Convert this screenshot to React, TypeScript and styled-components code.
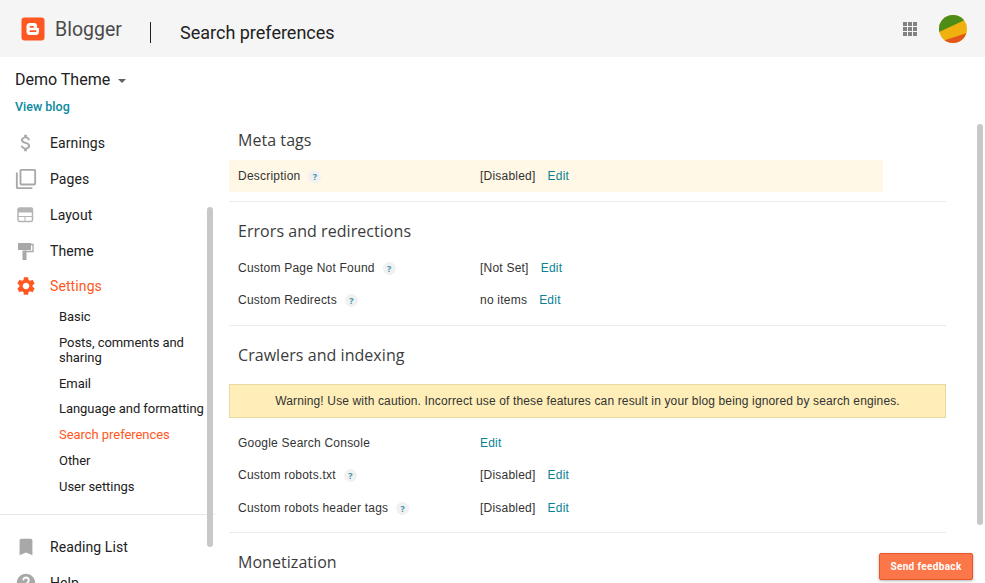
import styled, { createGlobalStyle } from "styled-components";
import {
  MdAttachMoney,
  MdFilterNone,
  MdSettings,
  MdBookmark,
  MdHelp,
} from "react-icons/md";

const GlobalStyle = createGlobalStyle`
  html, body {
    margin: 0;
    height: 100%;
    overflow: hidden;
    background: #fff;
  }
  #root {
    height: 100%;
  }
`;

const Page = styled.div`
  position: relative;
  display: flex;
  flex-direction: column;
  width: 985px;
  height: 583px;
  overflow: hidden;
  font-family: Roboto, "Liberation Sans", sans-serif;
  color: #212121;
`;

const Header = styled.header`
  display: flex;
  align-items: center;
  flex: 0 0 57px;
  height: 57px;
  box-sizing: border-box;
  padding: 0 18px 0 21px;
  background: #f5f5f5;
`;

const BrandName = styled.span`
  margin: 2px 0 0 10px;
  width: 95px;
  font-size: 19.5px;
  color: #4a4a4a;
`;

const HeaderRule = styled.span`
  width: 1px;
  height: 21px;
  margin-top: 7px;
  background: #212121;
`;

const PageTitle = styled.h1`
  flex: 1;
  margin: 7px 0 0 29px;
  font-size: 18px;
  font-weight: 400;
  color: #212121;
`;

const AppsGrid = styled.div`
  display: grid;
  grid-template-columns: repeat(3, 4px);
  grid-auto-rows: 4px;
  gap: 1px;
  margin-right: 22px;
  span {
    background: #828282;
  }
`;

const Body = styled.div`
  display: flex;
  flex: 1;
  min-height: 0;
`;

const Sidebar = styled.aside`
  flex: 0 0 215px;
  width: 215px;
`;

const BlogInfo = styled.div`
  padding: 13px 0 0 15px;
  height: 68px;
  box-sizing: border-box;
`;

const BlogName = styled.div`
  display: flex;
  align-items: center;
  gap: 8px;
  font-size: 16px;
  line-height: 20px;
  color: #212121;
  &::after {
    content: "";
    margin-top: 2px;
    border-left: 4px solid transparent;
    border-right: 4px solid transparent;
    border-top: 4px solid #616161;
  }
`;

const ViewBlog = styled.a`
  display: block;
  margin-top: 9px;
  font-size: 12.5px;
  line-height: 16px;
  font-weight: 500;
  color: #0b8aa0;
`;

const NavItem = styled.div<{ $active?: boolean }>`
  display: flex;
  align-items: center;
  height: ${({ $active }) => ($active ? 34 : 36)}px;
  padding-left: 15px;
  font-size: 14px;
  letter-spacing: 0.1px;
  color: ${({ $active }) => ($active ? "#ff5722" : "#212121")};
  svg {
    flex: 0 0 22px;
    color: ${({ $active }) => ($active ? "#ff5722" : "#a8a8a8")};
  }
  span {
    margin-left: 13px;
  }
`;

const SubNav = styled.div`
  display: flex;
  flex-direction: column;
  padding: 1px 0 0 59px;
`;

const SubItem = styled.a<{ $active?: boolean }>`
  display: block;
  padding: 5px 0 5.75px;
  font-size: 13px;
  line-height: 15px;
  letter-spacing: -0.05px;
  color: ${({ $active }) => ($active ? "#ff5722" : "#212121")};
`;

const SideRule = styled.div`
  height: 1px;
  margin: 15px 0 14px;
  background: #e6e6e6;
`;

const Main = styled.main`
  flex: 0 0 717px;
  width: 717px;
  padding: 71px 0 0 14px;
`;

const Section = styled.section<{ $tail?: number; $last?: boolean }>`
  padding: 17px 0 ${({ $tail }) => $tail ?? 9}px;
  border-bottom: ${({ $last }) => ($last ? "none" : "1px solid #ebebeb")};
  &:first-child {
    padding-top: 0;
  }
`;

const SectionTitle = styled.h2<{ $gap?: number }>`
  margin: 0 0 ${({ $gap }) => $gap ?? 9}px 9px;
  font-family: "Open Sans", sans-serif;
  font-size: 16px;
  line-height: 24px;
  font-weight: 400;
  letter-spacing: 0.05px;
  color: #3c3c3c;
`;

const Row = styled.div<{ $highlight?: boolean; $push?: number }>`
  display: flex;
  align-items: center;
  width: 654px;
  height: 32px;
  margin-top: ${({ $push }) => $push ?? 0}px;
  padding-left: 9px;
  box-sizing: border-box;
  font-family: "Liberation Sans", Arial, sans-serif;
  font-size: 12px;
  letter-spacing: 0.22px;
  color: #333;
  background: ${({ $highlight }) => ($highlight ? "#fff8e6" : "transparent")};
`;

const RowLabel = styled.div`
  display: flex;
  align-items: center;
  flex: 0 0 242px;
  gap: 8px;
`;

const HelpMark = styled.span`
  display: inline-flex;
  align-items: center;
  justify-content: center;
  width: 13px;
  height: 13px;
  border-radius: 50%;
  background: #f1f1f1;
  color: #3a93a8;
  font-family: "Open Sans", sans-serif;
  font-size: 9px;
  font-weight: 700;
  letter-spacing: 0;
`;

const RowValue = styled.span`
  margin-right: 12px;
`;

const EditLink = styled.a`
  color: #0b8294;
`;

const Warning = styled.div`
  display: flex;
  align-items: center;
  justify-content: center;
  height: 34px;
  margin-bottom: 9px;
  box-sizing: border-box;
  border: 1px solid #e8d9a0;
  background: #ffeeb8;
  font-family: "Liberation Sans", Arial, sans-serif;
  font-size: 12px;
  letter-spacing: 0.14px;
  color: #333;
`;

const Scrollbar = styled.div<{ $left: number; $top: number; $height: number }>`
  position: absolute;
  left: ${({ $left }) => $left}px;
  top: ${({ $top }) => $top}px;
  width: 6px;
  height: ${({ $height }) => $height}px;
  border-radius: 3px;
  background: #c8c8c8;
`;

const Feedback = styled.button`
  position: absolute;
  left: 879px;
  top: 553px;
  width: 94px;
  height: 27px;
  padding: 0;
  border: 1px solid #e8552a;
  border-radius: 2px;
  background: #fb7649;
  box-shadow: 0 1px 3px rgba(0, 0, 0, 0.3);
  color: #fff;
  font-family: Roboto, sans-serif;
  font-size: 10px;
  font-weight: 700;
  letter-spacing: 0.35px;
`;

const BloggerLogo = () => (
  <svg width="24" height="24" viewBox="0 0 24 24">
    <rect x="0.5" y="0.5" width="23" height="23" rx="3" fill="#ff5722" />
    <path
      d="M9.5 6h3.5a3 3 0 0 1 3 3v1.2c0 .6.4.8 1 .8.6 0 1 .4 1 1v2.5a3.5 3.5 0 0 1-3.5 3.5h-5.500a3.500 3.500 0 0 1-3.500-3.500v-5a3.500 3.500 0 0 1 3.500-3.500z"
      fill="#fff"
    />
    <rect x="8.500" y="9" width="4.500" height="1.800" rx="0.900" fill="#ff5722" />
    <rect x="8.500" y="13.300" width="7" height="1.800" rx="0.900" fill="#ff5722" />
  </svg>
);

const Avatar = () => (
  <svg width="28" height="28" viewBox="0 0 28 28">
    <defs>
      <clipPath id="avatar-clip">
        <circle cx="14" cy="14" r="14" />
      </clipPath>
    </defs>
    <g clipPath="url(#avatar-clip)">
      <rect width="28" height="28" fill="#f0b010" />
      <path d="M0 0h28v4L0 17z" fill="#4c8c17" />
      <path d="M0 27L28 18v10H0z" fill="#e2561c" />
    </g>
  </svg>
);

const LayoutIcon = () => (
  <svg width="22" height="22" viewBox="0 0 22 22">
    <rect x="3" y="4" width="14.500" height="13.500" rx="1.500" fill="none" stroke="#b4b4b4" strokeWidth="1.500" />
    <rect x="3" y="4" width="14.500" height="4.500" fill="#b4b4b4" />
    <path d="M3 12.500h14.500M10 12.500v5" stroke="#b4b4b4" strokeWidth="1" />
  </svg>
);

const RollerIcon = () => (
  <svg width="22" height="22" viewBox="0 0 22 22">
    <rect x="3" y="3" width="13" height="7" fill="#a8a8a8" />
    <path d="M16 4.500h2v7H9.500" fill="none" stroke="#a8a8a8" strokeWidth="1.300" />
    <rect x="7.500" y="10.500" width="4" height="9.500" fill="#a8a8a8" />
  </svg>
);

const subItems = [
  { label: "Basic" },
  { label: "Posts, comments and sharing" },
  { label: "Email" },
  { label: "Language and formatting" },
  { label: "Search preferences", active: true },
  { label: "Other" },
  { label: "User settings" },
];

const Help = () => <HelpMark>?</HelpMark>;

const App = () => {
  return (
    <Page>
      <GlobalStyle />
      <Header>
        <BloggerLogo />
        <BrandName>Blogger</BrandName>
        <HeaderRule />
        <PageTitle>Search preferences</PageTitle>
        <AppsGrid>
          {Array.from({ length: 9 }).map((_, i) => (
            <span key={i} />
          ))}
        </AppsGrid>
        <Avatar />
      </Header>
      <Body>
        <Sidebar>
          <BlogInfo>
            <BlogName>Demo Theme</BlogName>
            <ViewBlog>View blog</ViewBlog>
          </BlogInfo>
          <NavItem><MdAttachMoney size={22} /><span>Earnings</span></NavItem>
          <NavItem><MdFilterNone size={22} /><span>Pages</span></NavItem>
          <NavItem><LayoutIcon /><span>Layout</span></NavItem>
          <NavItem><RollerIcon /><span>Theme</span></NavItem>
          <NavItem $active><MdSettings size={22} /><span>Settings</span></NavItem>
          <SubNav>
            {subItems.map((item) => (
              <SubItem key={item.label} $active={item.active}>{item.label}</SubItem>
            ))}
          </SubNav>
          <SideRule />
          <NavItem><MdBookmark size={22} /><span>Reading List</span></NavItem>
          <NavItem><MdHelp size={22} /><span>Help</span></NavItem>
        </Sidebar>
        <Main>
          <Section>
            <SectionTitle $gap={8}>Meta tags</SectionTitle>
            <Row $highlight>
              <RowLabel>Description <Help /></RowLabel>
              <RowValue>[Disabled]</RowValue>
              <EditLink>Edit</EditLink>
            </Row>
          </Section>
          <Section>
            <SectionTitle>Errors and redirections</SectionTitle>
            <Row>
              <RowLabel>Custom Page Not Found <Help /></RowLabel>
              <RowValue>[Not Set]</RowValue>
              <EditLink>Edit</EditLink>
            </Row>
            <Row>
              <RowLabel>Custom Redirects <Help /></RowLabel>
              <RowValue>no items</RowValue>
              <EditLink>Edit</EditLink>
            </Row>
          </Section>
          <Section $tail={8}>
            <SectionTitle $gap={17}>Crawlers and indexing</SectionTitle>
            <Warning>Warning! Use with caution. Incorrect use of these features can result in your blog being ignored by search engines.</Warning>
            <Row>
              <RowLabel>Google Search Console</RowLabel>
              <EditLink>Edit</EditLink>
            </Row>
            <Row>
              <RowLabel>Custom robots.txt <Help /></RowLabel>
              <RowValue>[Disabled]</RowValue>
              <EditLink>Edit</EditLink>
            </Row>
            <Row $push={1}>
              <RowLabel>Custom robots header tags <Help /></RowLabel>
              <RowValue>[Disabled]</RowValue>
              <EditLink>Edit</EditLink>
            </Row>
          </Section>
          <Section $last>
            <SectionTitle>Monetization</SectionTitle>
          </Section>
        </Main>
      </Body>
      <Scrollbar $left={207} $top={207} $height={340} />
      <Scrollbar $left={977} $top={124} $height={401} />
      <Feedback>Send feedback</Feedback>
    </Page>
  );
};

export default App;
